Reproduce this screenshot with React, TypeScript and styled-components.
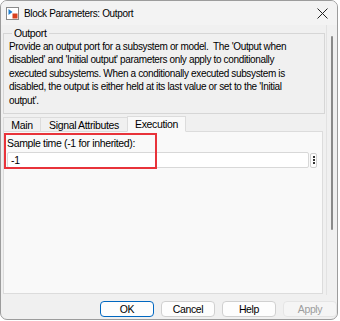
import styled, { createGlobalStyle } from "styled-components";

const GlobalStyle = createGlobalStyle`
  html, body {
    margin: 0;
    padding: 0;
    background: #ffffff;
  }
  body {
    font-family: "Liberation Sans", Arial, sans-serif;
    font-size: 10px;
    letter-spacing: -0.35px;
    color: #000;
  }
`;

const Window = styled.div`
  width: 338px;
  height: 320px;
  box-sizing: border-box;
  border: 1px solid #9c9c9c;
  border-radius: 7px;
  background: #f0f0f0;
  display: flex;
  flex-direction: column;
  overflow: hidden;
`;

const TitleBar = styled.div`
  height: 24px;
  flex: none;
  display: flex;
  align-items: center;
  padding: 0 0 0 5px;
  background: #f3f3f3;
`;

const TitleText = styled.span`
  margin-left: 5px;
  font-size: 10px;
  color: #000;
  flex: 1;
`;

const CloseButton = styled.div`
  width: 24px;
  height: 24px;
  display: flex;
  align-items: center;
  justify-content: center;
  margin-right: 3px;
`;

const Main = styled.div`
  flex: 1;
  display: flex;
  min-height: 0;
`;

const Content = styled.div`
  width: 326px;
  padding: 3px 0 0 2px;
  box-sizing: border-box;
  display: flex;
  flex-direction: column;
  border-right: 1px solid #e2e2e2;
`;

const ScrollTrack = styled.div`
  flex: 1;
  padding-top: 11px;
  display: flex;
  justify-content: center;
`;

const ScrollThumb = styled.div`
  width: 2px;
  height: 194px;
  border-radius: 1px;
  background: #8a8a8a;
`;

const GroupBox = styled.fieldset`
  margin: 0;
  padding: 2px 4px 6px 5px;
  border: 1px solid #d6d6d6;
  width: 322px;
  box-sizing: border-box;
`;

const GroupLabel = styled.legend`
  padding: 0 2px;
  margin-left: 3px;
  font-size: 10.5px;
  line-height: 10px;
`;

const Description = styled.p`
  margin: 0;
  font-size: 10px;
  line-height: 13.4px;
  white-space: pre;
`;

const TabBar = styled.div`
  display: flex;
  align-items: flex-end;
  margin-top: 2px;
  height: 16px;
`;

const Tab = styled.div<{ $active?: boolean; $width: number }>`
  width: ${(p) => p.$width}px;
  height: ${(p) => (p.$active ? 16 : 15)}px;
  box-sizing: border-box;
  display: flex;
  align-items: center;
  justify-content: center;
  font-size: 10.5px;
  background: ${(p) => (p.$active ? "#f9f9f9" : "#f0f0f0")};
  border: 1px solid #dcdcdc;
  border-bottom: ${(p) => (p.$active ? "1px solid #f9f9f9" : "none")};
  margin-left: -1px;
  position: relative;
  z-index: ${(p) => (p.$active ? 1 : 0)};
  &:first-child {
    margin-left: 0;
  }
`;

const TabPanel = styled.div`
  position: relative;
  margin-top: -1px;
  width: 320px;
  height: 163px;
  box-sizing: border-box;
  background: #f9f9f9;
  border: 1px solid #dcdcdc;
  padding: 3px 0 0 3px;
`;

const FieldLabel = styled.div`
  font-size: 10.5px;
  height: 16px;
  line-height: 16px;
`;

const FieldRow = styled.div`
  display: flex;
  align-items: center;
  gap: 1px;
  margin-top: 1px;
`;

const TextInput = styled.div`
  width: 302px;
  height: 16px;
  box-sizing: border-box;
  background: #ffffff;
  border: 1px solid #d8d8d8;
  border-radius: 2px;
  padding-left: 3px;
  font-size: 10.5px;
  line-height: 14px;
`;

const MoreButton = styled.div`
  width: 7px;
  height: 15px;
  box-sizing: border-box;
  border: 1px solid #cfcfcf;
  border-radius: 2px;
  background: #fdfdfd;
  display: flex;
  flex-direction: column;
  align-items: center;
  justify-content: center;
  gap: 1px;
`;

const Dot = styled.span`
  width: 2px;
  height: 2px;
  background: #333;
`;

const Highlight = styled.div`
  position: absolute;
  left: 0;
  top: 1px;
  width: 153px;
  height: 36px;
  box-sizing: border-box;
  border: 2px solid #e8333a;
  pointer-events: none;
`;

const Footer = styled.div`
  height: 24px;
  flex: none;
  display: flex;
  justify-content: flex-end;
  align-items: flex-start;
  gap: 7px;
  padding: 6px 0 0 0;
  box-sizing: border-box;
`;

const Button = styled.div<{ $primary?: boolean; $disabled?: boolean }>`
  width: 54px;
  height: 16px;
  box-sizing: border-box;
  display: flex;
  align-items: center;
  justify-content: center;
  font-size: 10.5px;
  border-radius: 4px;
  background: ${(p) => (p.$disabled ? "#f5f5f5" : "#fdfdfd")};
  color: ${(p) => (p.$disabled ? "#9d9d9d" : "#000")};
  border: 1px solid
    ${(p) => (p.$primary ? "#0067c0" : p.$disabled ? "#e5e5e5" : "#d0d0d0")};
`;

function BlockIcon() {
  return (
    <svg width="13" height="13" viewBox="0 0 13 13">
      <rect x="0.5" y="0.5" width="12" height="12" fill="#ffffff" stroke="#8a8a8a" />
      <path d="M2.5 2 L2.5 8 L6.5 5 Z" fill="#1d7fd1" />
      <rect x="6.5" y="6.5" width="5" height="5" fill="#d9401f" />
    </svg>
  );
}

function CloseIcon() {
  return (
    <svg width="11" height="11" viewBox="0 0 11 11">
      <path d="M0.5 0.5 L10.5 10.5 M10.5 0.5 L0.5 10.5" stroke="#222" strokeWidth="1" />
    </svg>
  );
}

const description = `Provide an output port for a subsystem or model.  The 'Output when
disabled' and 'Initial output' parameters only apply to conditionally
executed subsystems. When a conditionally executed subsystem is
disabled, the output is either held at its last value or set to the 'Initial
output'.`;

const tabs = [
  { label: "Main", width: 38 },
  { label: "Signal Attributes", width: 88 },
  { label: "Execution", width: 59, active: true },
];

export default function App() {
  return (
    <>
      <GlobalStyle />
      <Window>
        <TitleBar>
          <BlockIcon />
          <TitleText>Block Parameters: Outport</TitleText>
          <CloseButton>
            <CloseIcon />
          </CloseButton>
        </TitleBar>
        <Main>
          <Content>
            <GroupBox>
              <GroupLabel>Outport</GroupLabel>
              <Description>{description}</Description>
            </GroupBox>
            <TabBar>
              {tabs.map((t) => (
                <Tab key={t.label} $width={t.width} $active={t.active}>
                  {t.label}
                </Tab>
              ))}
            </TabBar>
            <TabPanel>
              <FieldLabel>Sample time (-1 for inherited):</FieldLabel>
              <FieldRow>
                <TextInput>-1</TextInput>
                <MoreButton>
                  <Dot />
                  <Dot />
                  <Dot />
                </MoreButton>
              </FieldRow>
              <Highlight />
            </TabPanel>
          </Content>
          <ScrollTrack>
            <ScrollThumb />
          </ScrollTrack>
        </Main>
        <Footer>
          <Button $primary>OK</Button>
          <Button>Cancel</Button>
          <Button>Help</Button>
          <Button $disabled>Apply</Button>
        </Footer>
      </Window>
    </>
  );
}
